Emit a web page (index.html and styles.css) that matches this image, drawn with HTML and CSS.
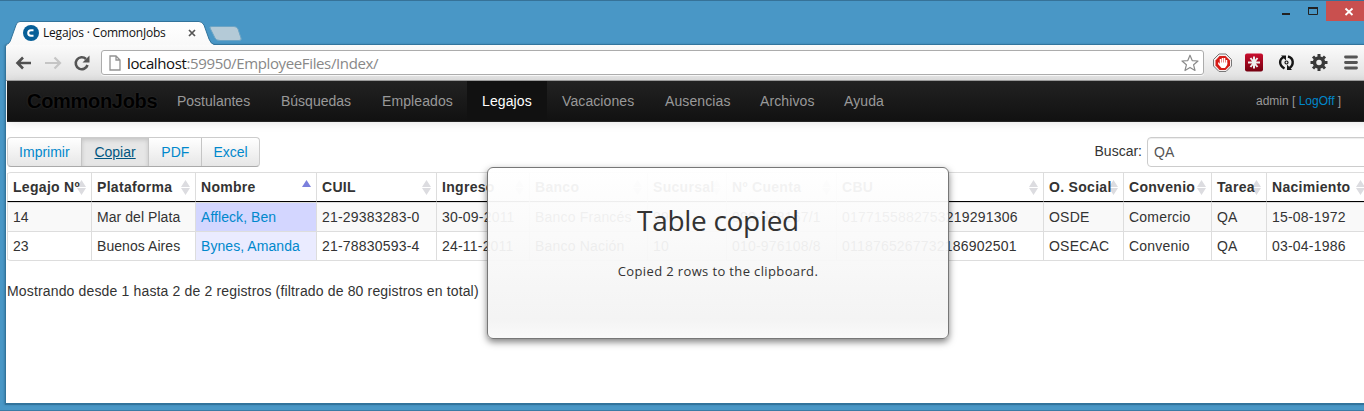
FILE: index.html
```html
<!DOCTYPE html>
<html lang="es">
<head>
<meta charset="utf-8">
<title>Legajos · CommonJobs</title>
<link rel="stylesheet" href="styles.css">
</head>
<body>
<div class="desktop">
  <header class="tabstrip">
    <div class="tab">
      <svg class="tab-shape" width="240" height="25" viewBox="0 0 240 25">
        <defs><linearGradient id="tabfill" x1="0" y1="0" x2="0" y2="1"><stop offset="0" stop-color="#fff"/><stop offset="1" stop-color="#f9f9f9"/></linearGradient></defs>
        <path d="M0 24.500C3 24 4 22 5 19L10 5Q11 1.500 14 1.500H193Q196 1.500 198 5L203 19Q205 24 208 24.500V25H0Z" fill="url(#tabfill)"/>
        <path d="M0 24.500C3 24 4 22 5 19L10 5Q11 1.500 14 1.500H193Q196 1.500 198 5L203 19Q205 24 208 24.500" fill="none" stroke="#32749c"/>
        <path d="M206 6.500H228Q231 6.500 232 9L235 18Q236 20.500 233 20.500H214Q210 20.500 209 18L204 8Q203 6.500 206 6.500Z" fill="#b4cad7" stroke="#6da4c4"/>
      </svg>
      <div class="tab-content">
        <svg width="16" height="16" viewBox="0 0 16 16"><circle cx="8" cy="8" r="8" fill="#075f98"/><path d="M10.500 5.200H8A2.800 2.800 0 0 0 8 10.800H10.500" fill="none" stroke="#fff" stroke-width="2"/></svg>
        <span class="tab-title">Legajos · CommonJobs</span>
        <svg class="tab-close" width="8" height="8" viewBox="0 0 8 8"><path d="M1 1L7 7M7 1L1 7" stroke="#555" stroke-width="1.700"/></svg>
      </div>
    </div>
    <div class="window-buttons">
      <svg width="38" height="21" viewBox="0 0 38 21"><path d="M20 14H28" stroke="#222" stroke-width="2"/></svg>
      <svg width="26" height="21" viewBox="0 0 26 21"><path d="M8.500 8V14.500H17.500V8" fill="none" stroke="#222"/><path d="M8 8H18" stroke="#222" stroke-width="2"/></svg>
      <svg class="close" width="38" height="20" viewBox="0 0 38 20"><path d="M19.500 7.500L26.500 14M26.500 7.500L19.500 14" stroke="#fff" stroke-width="1.800"/></svg>
    </div>
  </header>
  <div class="window">
    <div class="toolbar">
      <svg class="nav-icons" width="84" height="20" viewBox="0 0 84 20" fill="none">
        <path d="M25 10H11.500M17 4.500L11.500 10L17 15.500" stroke="#505050" stroke-width="2.600"/>
        <path d="M39 10H53M48.500 4.500L54 10L48.500 15.500" stroke="#c5c5c5" stroke-width="2.200"/>
        <path d="M80 6A6 6 0 1 0 81.500 12" stroke="#555" stroke-width="2.600"/><path d="M83.500 2.500V9.500H76.500Z" fill="#555"/>
      </svg>
      <div class="address">
        <svg width="12" height="16" viewBox="0 0 12 16"><path d="M1 1H7L11 5V15H1ZM7 1V5H11" fill="#fff" stroke="#929292" stroke-width="1.300"/></svg>
        <span class="url"><b>localhost</b>:59950/EmployeeFiles/Index/</span>
        <svg class="star" width="18" height="18" viewBox="0 0 18 18"><path d="M9 1.200L11.200 6.600L17 7L12.600 10.800L14 16.500L9 13.400L4 16.500L5.400 10.800L1 7L6.800 6.600Z" fill="#fff" stroke="#8b8b8b" stroke-width="1.200" stroke-linejoin="round"/></svg>
      </div>
      <svg class="extensions" width="150" height="20" viewBox="0 0 150 20">
        <path d="M6 1H13L18.500 6.500V13L13 18.500H6L0.500 13V6.500Z" fill="#f5eeee" stroke="#777"/><path d="M6.500 3H12.500L17 7.500V12.500L12.500 17H6.500L2.500 12.500V7.500Z" fill="#d61b16"/><path d="M7.500 6V11M9.500 5V11M11.500 5V11M13.500 7V11" stroke="#fff" stroke-width="1.500"/><path d="M5.500 9L7 11V9.500H14.200V12L12 15H8.500L5 11Z" fill="#fff"/>
        <defs><linearGradient id="redbox" x1="0" y1="0" x2="0" y2="1"><stop stop-color="#c90e2e"/><stop offset="1" stop-color="#750010"/></linearGradient></defs>
        <rect x="32" y="0.500" width="18" height="18" rx="2" fill="url(#redbox)"/><path d="M41 3.500V15.500M35 9.500H47M37.500 5L44.500 14M44.500 5L37.500 14" stroke="#eee" stroke-width="2"/>
        <g fill="none" stroke="#161616" stroke-width="2.400"><path d="M71.500 15.500C65.500 12 66 6 71 4M75 3.500C81 5 81 12 76.500 15"/><circle cx="73.500" cy="9.500" r="1.500" stroke-width="1.200"/></g><path d="M68 2.500H73V7.500ZM74 11.500V17H79Z" fill="#161616"/>
        <g transform="translate(106 9.500)" fill="none" stroke="#393939"><circle r="4.500" stroke-width="3.500"/><path d="M0 -8.500V-5M0 8.500V5M-8.500 0H-5M8.500 0H5M-6 -6L-4 -4M6 6L4 4M6 -6L4 -4M-6 6L-4 4" stroke-width="3"/></g>
        <path d="M132.500 4H143.500M132.500 9.500H143.500M132.500 15H143.500" stroke="#555" stroke-width="2.800" stroke-linecap="round"/>
      </svg>
    </div>
    <nav class="navbar">
      <a class="brand">CommonJobs</a>
      <a class="postulantes">Postulantes</a><a class="busquedas">Búsquedas</a><a class="empleados">Empleados</a><a class="legajos active">Legajos</a><a class="vacaciones">Vacaciones</a><a class="ausencias">Ausencias</a><a class="archivos">Archivos</a><a class="ayuda">Ayuda</a>
      <span class="login">admin [ <span class="link">LogOff</span> ]</span>
    </nav>
    <main class="page">
      <div class="controls">
        <div class="button-group"><a class="b1">Imprimir</a><a class="b2 pressed">Copiar</a><a class="b3">PDF</a><a class="b4">Excel</a></div>
        <div class="search"><span>Buscar:</span><div class="input">QA</div></div>
      </div>
      <table class="records">
        <colgroup><col class="c1"><col class="c2"><col class="c3"><col class="c4"><col class="c5"><col class="c6"><col class="c7"><col class="c8"><col class="c9"><col class="c10"><col class="c11"><col class="c12"><col class="c13"></colgroup>
        <thead><tr><th>Legajo Nº</th><th>Plataforma</th><th class="asc">Nombre</th><th>CUIL</th><th>Ingreso</th><th>Banco</th><th>Sucursal</th><th>Nº Cuenta</th><th>CBU</th><th>O. Social</th><th>Convenio</th><th>Tarea</th><th>Nacimiento</th></tr></thead>
        <tbody>
          <tr class="odd"><td>14</td><td>Mar del Plata</td><td class="sorted">Affleck, Ben</td><td>21-29383283-0</td><td>30-09-2011</td><td>Banco Francés</td><td>99</td><td>099-978167/1</td><td>0177155882753219291306</td><td>OSDE</td><td>Comercio</td><td>QA</td><td>15-08-1972</td></tr>
          <tr><td>23</td><td>Buenos Aires</td><td class="sorted">Bynes, Amanda</td><td>21-78830593-4</td><td>24-11-2011</td><td>Banco Nación</td><td>10</td><td>010-976108/8</td><td>0118765267732186902501</td><td>OSECAC</td><td>Convenio</td><td>QA</td><td>03-04-1986</td></tr>
        </tbody>
      </table>
      <p class="info">Mostrando desde 1 hasta 2 de 2 registros (filtrado de 80 registros en total)</p>
    </main>
  </div>
  <div class="notice"><h2>Table copied</h2><p>Copied 2 rows to the clipboard.</p></div>
</div>
</body>
</html>
```
FILE: styles.css
```css
* { box-sizing: border-box; }
body { margin: 0; font: 14px/20px "Liberation Sans", sans-serif; color: #333; overflow: hidden; }
.desktop { position: relative; width: 1364px; height: 411px; background: #4997c6; border-top: 1px solid #367298; border-bottom: 1px solid #3a7ba5; overflow: hidden; }
.tabstrip { height: 43px; display: flex; justify-content: space-between; }
.tab { position: relative; margin: 19px 0 0 6px; width: 240px; height: 25px; }
.tab-shape { position: absolute; left: 0; top: 0; z-index: 2; }
.tab-content { position: relative; z-index: 3; display: flex; align-items: center; height: 25px; padding-left: 17px; }
.tab-title { width: 140px; margin-left: 4px; font: 12px/18px "Open Sans", sans-serif; letter-spacing: -.2px; color: #111; white-space: nowrap; }
.tab-close { margin-left: 5px; }
.window-buttons { display: flex; height: 20px; }
.window-buttons svg { display: block; margin-top: -1px; }
.window-buttons .close { background: #c9504f; margin-top: 0; width: 38px; }
.window { margin-left: 5px; width: 1370px; height: 361px; background: #fff; border: 1px solid #32749c; border-right: 0; border-bottom: 2px solid #32749c; border-radius: 3px 0 0 0; overflow: hidden; box-shadow: -1px 0 2px #397fa9; padding-left: 1px; }
.toolbar { height: 36px; display: flex; align-items: center; background: linear-gradient(#fbfbfb, #e1e1e1); border-bottom: 1px solid #a2a2a2; margin-left: -1px; }
.address { display: flex; align-items: center; margin-left: 11px; width: 1103px; height: 25px; padding: 0 4px 0 7px; border: 1px solid #acacac; border-radius: 3px; background: #fff; box-shadow: 0 1px #f7f7f7; }
.url { margin-left: 6px; font: 15px/22px "Open Sans", sans-serif; letter-spacing: -.37px; color: #888; white-space: nowrap; }
.url b { font-weight: 400; color: #111; }
.star { margin-left: auto; }
.extensions { margin-left: 9px; }
.navbar { display: flex; height: 41px; background: linear-gradient(#222, #111); border-bottom: 1px solid #252525; box-shadow: 0 1px 10px rgba(0,0,0,.1); color: #999; line-height: 40px; white-space: nowrap; }
.navbar a { padding-left: 15px; letter-spacing: .1px; }
.navbar .brand { width: 155px; padding-left: 20px; font-size: 20px; font-weight: 700; letter-spacing: -.3px; color: #000; text-shadow: 0 0 2px #333; }
.postulantes { width: 104px; } .busquedas { width: 101px; } .empleados { width: 100px; } .legajos { width: 80px; } .vacaciones { width: 103px; } .ausencias { width: 95px; } .archivos { width: 84px; } .ayuda { width: 70px; }
.navbar .postulantes, .navbar .busquedas { letter-spacing: 0; }
.navbar .active { background: #111; color: #fff; }
.login { margin-left: 357px; font-size: 12px; }
.link { color: #0088cc; }
.page { padding-top: 15px; }
.controls { height: 35px; display: flex; justify-content: space-between; }
.button-group { display: flex; height: 30px; width: 253px; border: 1px solid #ccc; border-bottom-color: #aaa; border-radius: 4px; overflow: hidden; background: linear-gradient(#fff, #e6e6e6); color: #08c; line-height: 28px; text-align: center; }
.button-group a + a { border-left: 1px solid #c5c5c5; }
.b1 { width: 73px; } .b2 { width: 68px; } .b3 { width: 53px; } .b4 { width: 58px; }
.pressed { background: #e6e6e6; color: #005580; text-decoration: underline; box-shadow: inset 0 2px 4px rgba(0,0,0,.15); }
.search { display: flex; }
.search span { line-height: 28px; margin-right: 5px; }
.input { width: 228px; height: 30px; padding: 4px 6px; border: 1px solid #ccc; border-radius: 4px; color: #555; box-shadow: inset 0 1px 1px rgba(0,0,0,.075); }
.records { table-layout: fixed; width: 1363px; border: 1px solid #ddd; border-left: 0; border-radius: 4px; border-spacing: 0; white-space: nowrap; }
.records th, .records td { height: 29px; padding: 0 0 0 5px; border-left: 1px solid #ddd; line-height: 28px; text-align: left; }
.records th { border-bottom: 1px solid #000; background: url("data:image/svg+xml,%3Csvg xmlns='http://www.w3.org/2000/svg' width='9' height='15'%3E%3Cpath d='M4.500 0L9 7H0ZM0 8H9L4.500 15Z' fill='%23dcdce0'/%3E%3C/svg%3E") right 5px top 7px no-repeat; letter-spacing: .3px; }
.records th.asc { background-image: url("data:image/svg+xml,%3Csvg xmlns='http://www.w3.org/2000/svg' width='9' height='7'%3E%3Cpath d='M4.500 0L9 7H0Z' fill='%237b80dd'/%3E%3C/svg%3E"); }
.records td { border-top: 1px solid #ddd; letter-spacing: .2px; }
.records td:nth-child(-n+3) { letter-spacing: .06px; }
.odd td { background: #f9f9f9; }
.records .sorted { color: #08c; background: #eaebff; }
.records .odd .sorted { background: #d3d6ff; }
.c1 { width: 84px; } .c2 { width: 104px; } .c3 { width: 121px; } .c4 { width: 120px; } .c5 { width: 93px; } .c6 { width: 118px; } .c7 { width: 79px; } .c8 { width: 110px; } .c9 { width: 207px; } .c10 { width: 80px; } .c11 { width: 88px; } .c12 { width: 55px; } .c13 { width: 104px; }
.info { margin: 20px 0 0; letter-spacing: .155px; }
.notice { position: absolute; left: 487px; top: 166px; width: 462px; height: 172px; border: 1px solid #777; border-radius: 6px; background: linear-gradient(rgba(255,255,255,.94) 0%, rgba(243,243,243,.94) 89%, rgba(249,249,249,.94) 100%); box-shadow: 0 3px 7px rgba(0,0,0,.5); text-align: center; font-family: "Open Sans", sans-serif; }
.notice h2 { margin: 32px 0 0; font: 28px/40px "Open Sans", sans-serif; letter-spacing: -.3px; }
.notice p { margin: 21px 0 0; font-size: 13px; line-height: 20px; letter-spacing: .37px; }
```
